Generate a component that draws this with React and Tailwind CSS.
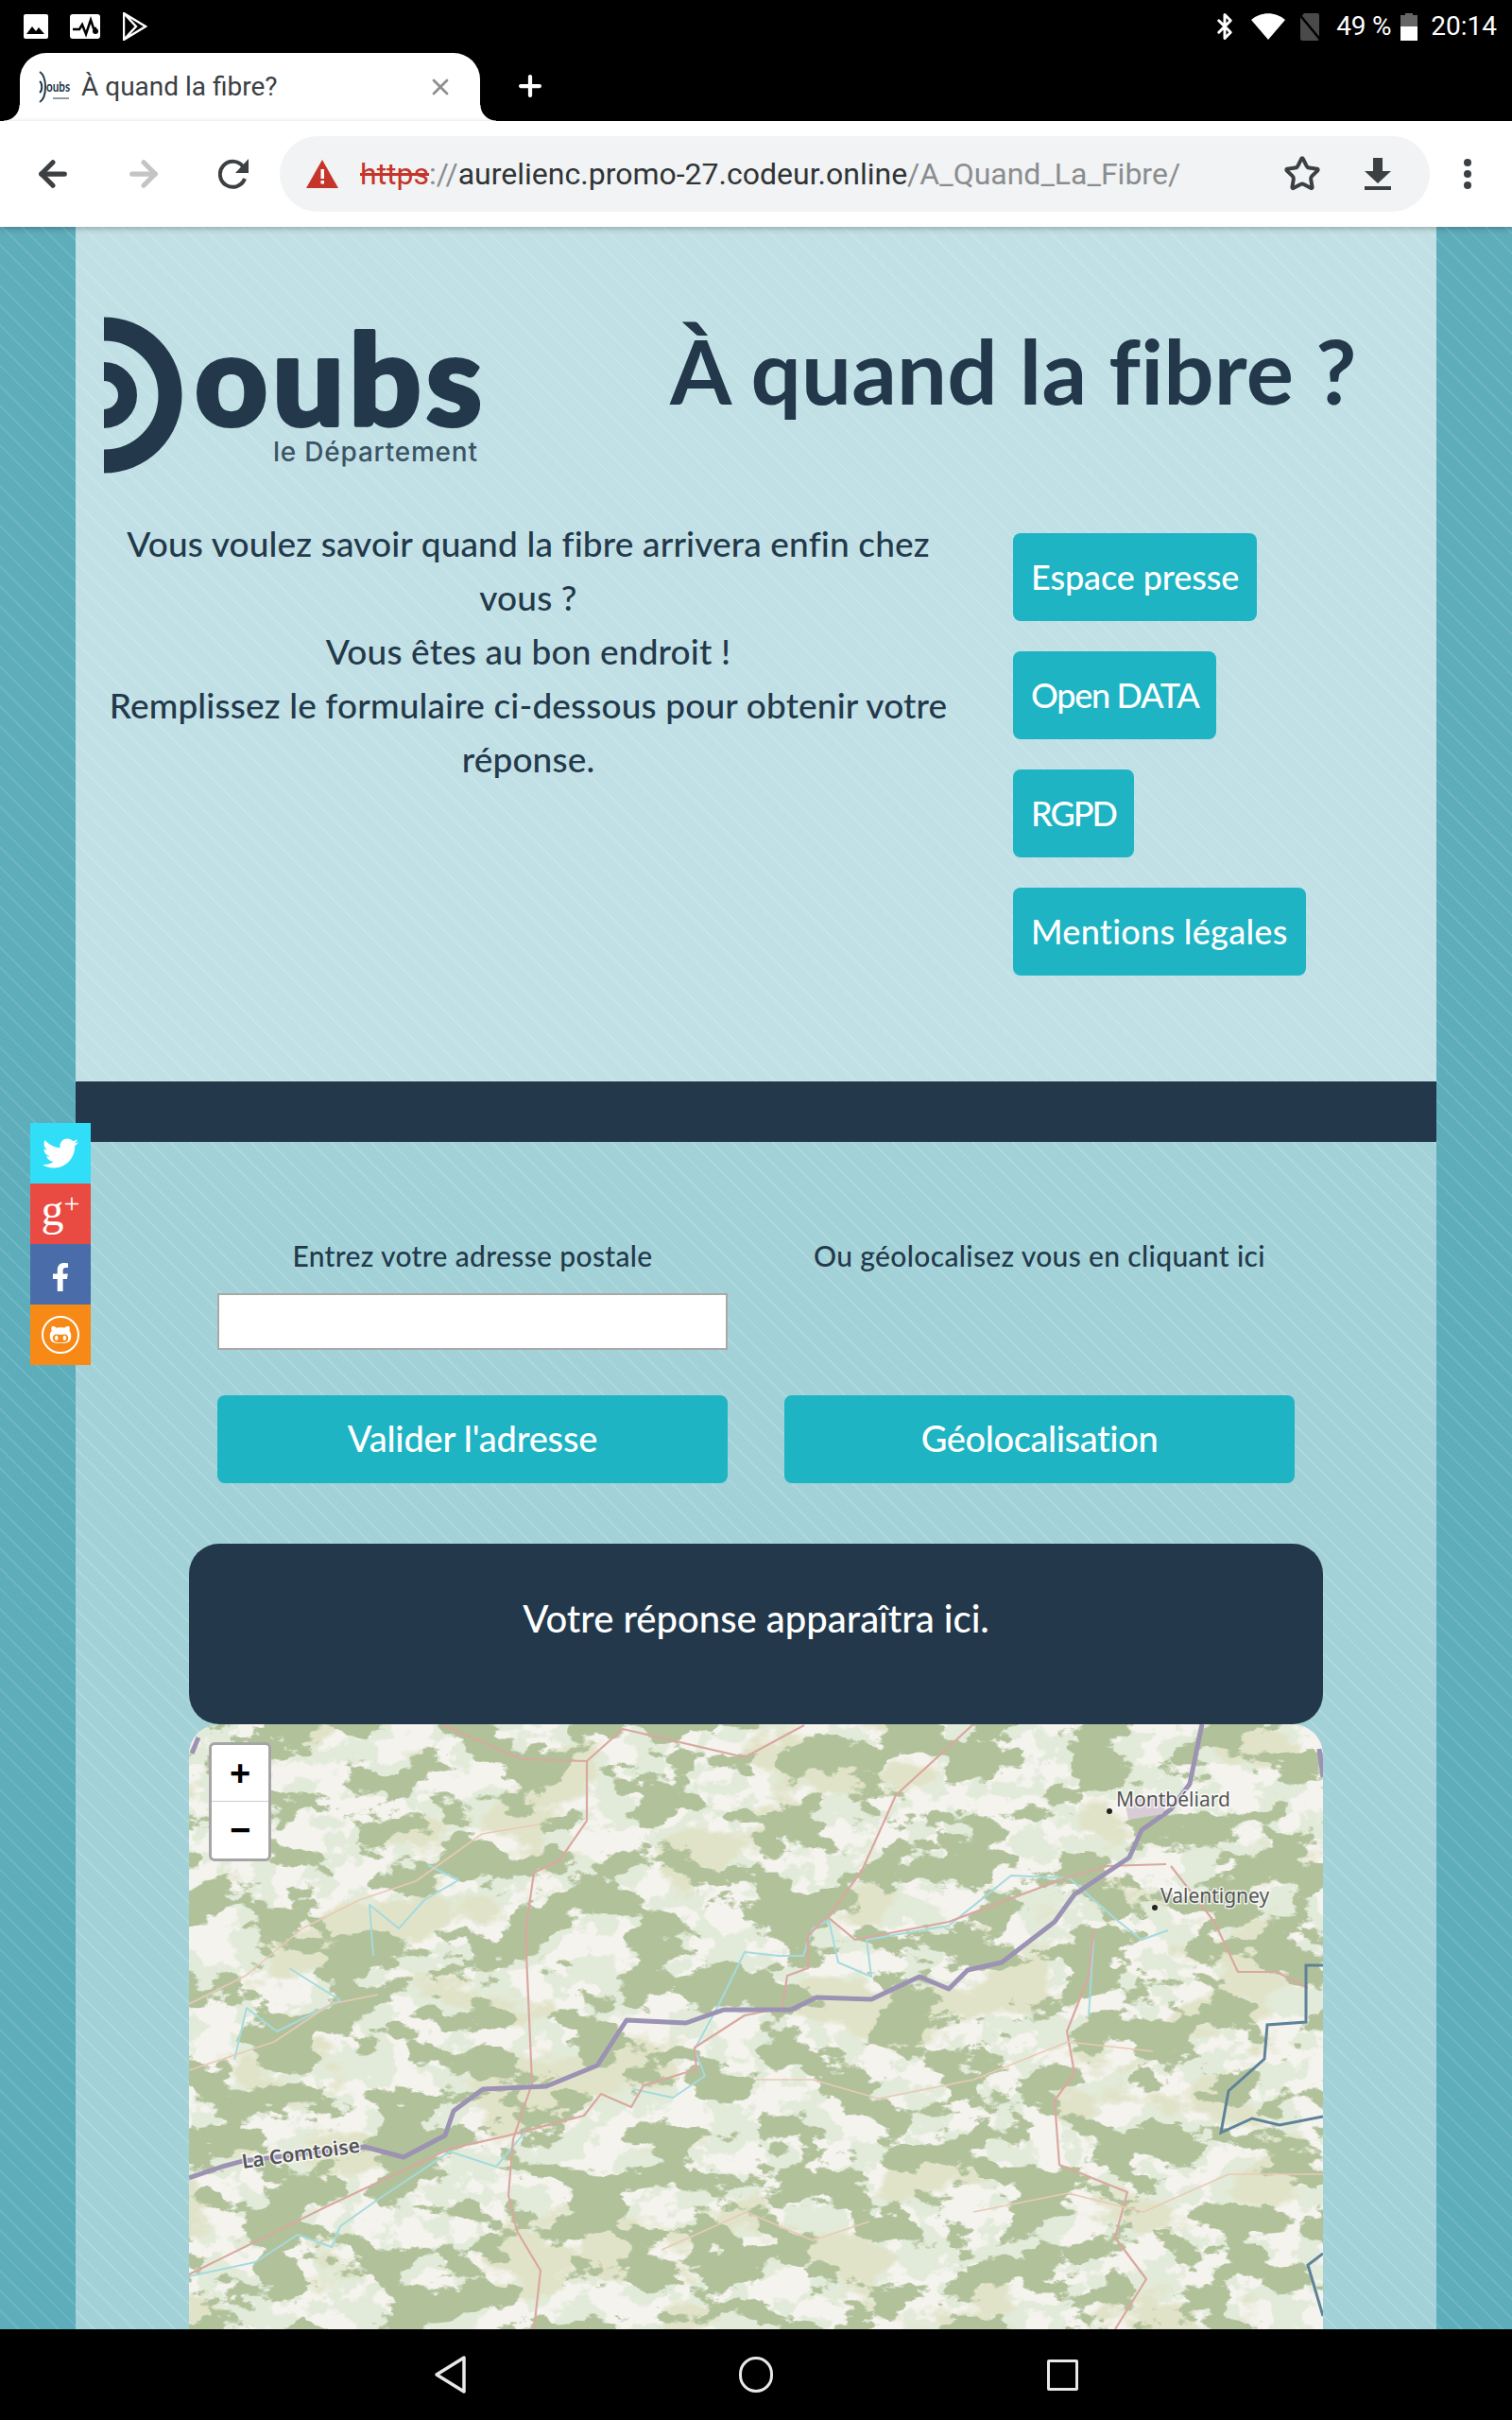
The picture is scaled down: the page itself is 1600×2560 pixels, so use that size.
import React from "react";
import { ArrowLeft, ArrowRight, Star, X, Plus, Bluetooth } from "lucide-react";
import { FaTwitter, FaFacebookF, FaGithubAlt } from "react-icons/fa";

const navy = "#23394b";

function StatusBar() {
  return (
    <div className="h-[56px] bg-black flex items-center pl-[25px] pr-[16px] text-white">
      <svg width="26" height="26" viewBox="0 0 26 26">
        <rect width="26" height="26" rx="2" fill="#fff" />
        <path d="M3 21l6-8 4 5 3-4 6 7z" fill="#000" />
      </svg>
      <svg className="ml-[23px]" width="32" height="26" viewBox="0 0 32 26">
        <rect width="32" height="26" rx="3" fill="#fff" />
        <path d="M3 16h7l3-5 4 10 5-15 3 9h3" fill="none" stroke="#000" strokeWidth="2.5" />
        <circle cx="27" cy="18" r="3" fill="#000" />
      </svg>
      <svg className="ml-[24px]" width="26" height="30" viewBox="0 0 26 30">
        <path d="M1 1l23 14L1 29z M1 1l13 14L1 29" fill="none" stroke="#fff" strokeWidth="2.4" />
      </svg>
      <div className="ml-auto flex items-center text-[28px] font-['Roboto',sans-serif]">
        <Bluetooth size={30} strokeWidth={2.4} />
        <svg className="ml-[13px]" width="36" height="28" viewBox="0 0 36 28">
          <path d="M0 7C10-2 26-2 36 7L18 28z" fill="#fff" />
        </svg>
        <svg className="ml-[13px]" width="26" height="30" viewBox="0 0 26 30">
          <path d="M7 1h14a2 2 0 012 2v25a2 2 0 01-2 2H5a2 2 0 01-2-2V6z" fill="#4a4a4a" />
          <path d="M1 1l24 29" stroke="#000" strokeWidth="2.5" />
        </svg>
        <span className="ml-[15px] tracking-[-0.2px]">49 %</span>
        <div className="ml-[10px] w-[18px] h-[29px] flex flex-col items-center">
          <div className="w-[8px] h-[2px] bg-[#666]" />
          <div className="w-full h-[12px] bg-[#666]" />
          <div className="w-full flex-1 bg-white" />
        </div>
        <span className="ml-[14px]">20:14</span>
      </div>
    </div>
  );
}

function TabStrip() {
  return (
    <div className="h-[72px] bg-black flex items-end text-white">
      <div className="relative ml-[21px] w-[487px] h-[72px] bg-white rounded-t-[28px] flex items-center pl-[20px] pr-[28px] text-[#3c4043]">
        <div className="absolute left-[-17px] bottom-0 w-[17px] h-[17px] bg-[radial-gradient(circle_at_0_0,#000_16px,#fff_17px)]" />
        <div className="absolute right-[-17px] bottom-0 w-[17px] h-[17px] bg-[radial-gradient(circle_at_100%_0,#000_16px,#fff_17px)]" />
        <svg width="34" height="34" viewBox="0 0 34 34" className="overflow-visible">
          <path d="M1 1C9 6 9 28 1 33" fill="none" stroke={navy} strokeWidth="2" />
          <path d="M1 11C4 13 4 21 1 23" fill="none" stroke={navy} strokeWidth="2" />
          <text x="8" y="22" fontSize="15" fontWeight="700" fill={navy} textLength="25" lengthAdjust="spacingAndGlyphs" fontFamily="Lato, sans-serif">oubs</text>
          <path d="M15 29h17" stroke="#6b7a86" strokeWidth="1.5" />
        </svg>
        <span className="ml-[11px] text-[28px] font-['Roboto',sans-serif]">À quand la fibre?</span>
        <X className="ml-auto text-[#8f8f8f]" size={28} strokeWidth={2.4} />
      </div>
      <Plus className="ml-[36px] mb-[20px]" size={34} strokeWidth={3} />
    </div>
  );
}

function Toolbar() {
  return (
    <div className="relative z-10 h-[112px] bg-white flex items-center pl-[8px] shadow-[0_2px_6px_rgba(0,0,0,0.25)] font-['Roboto',sans-serif]">
      <div className="w-[96px] flex justify-center"><ArrowLeft size={42} strokeWidth={3} className="text-[#3c4043]" /></div>
      <div className="w-[96px] flex justify-center"><ArrowRight size={42} strokeWidth={3} className="text-[#c4c4c4]" /></div>
      <div className="w-[96px] flex justify-center">
        <svg width="34" height="34" viewBox="0 0 34 34">
          <path d="M28 22a13.5 13.5 0 11-2-13" fill="none" stroke="#3c4043" strokeWidth="4" />
          <path d="M32 1v15H18z" fill="#3c4043" />
        </svg>
      </div>
      <div className="w-[1217px] h-[80px] bg-[#f1f3f4] rounded-full flex items-center pl-[28px] pr-[41px]">
        <svg width="34" height="30" viewBox="0 0 34 30">
          <path d="M17 0l17 30H0z" fill="#c5352a" />
          <rect x="15.5" y="10" width="3.5" height="10" fill="#fff" />
          <rect x="15.5" y="22" width="3.5" height="3.5" fill="#fff" />
        </svg>
        <div className="ml-[23px] text-[32px] whitespace-nowrap">
          <span className="text-[#c5352a] line-through">https</span>
          <span className="text-[#8a8d90]">://</span>
          <span className="text-[#303336]">aurelienc.promo-27.codeur.online</span>
          <span className="text-[#8a8d90]">/A_Quand_La_Fibre/</span>
        </div>
        <Star className="ml-auto text-[#3c4043]" size={40} strokeWidth={2.4} />
        <svg className="ml-[46px]" width="28" height="34" viewBox="0 0 28 34">
          <path d="M9 0h10v14h9L14 27 0 14h9z" fill="#3c4043" />
          <rect y="30" width="28" height="4" fill="#3c4043" />
        </svg>
      </div>
      <div className="ml-[36px] flex flex-col gap-[4px]">
        <span className="w-[8px] h-[8px] rounded-full bg-[#3c4043]" />
        <span className="w-[8px] h-[8px] rounded-full bg-[#3c4043]" />
        <span className="w-[8px] h-[8px] rounded-full bg-[#3c4043]" />
      </div>
    </div>
  );
}

function Logo() {
  return (
    <svg width="420" height="204" viewBox="110 300 420 204" className="shrink-0">
      <circle cx="110" cy="418" r="70" fill="none" stroke={navy} strokeWidth="25" />
      <circle cx="110" cy="418" r="25" fill="none" stroke={navy} strokeWidth="20" />
      <text x="206" y="450" fontFamily="Lato, sans-serif" fontWeight="900" fontSize="134" fill={navy} stroke={navy} strokeWidth="4" strokeLinejoin="round" textLength="304" lengthAdjust="spacing">oubs</text>
      <text x="289" y="488" fontFamily="Inter, sans-serif" fontWeight="500" fontSize="28" fill="#3c5466" textLength="216" lengthAdjust="spacing">le Département</text>
    </svg>
  );
}

const links = [
  { label: "Espace presse", cls: "tracking-[-0.1px]" },
  { label: "Open DATA", cls: "tracking-[-1.3px]" },
  { label: "RGPD", cls: "tracking-[-2px]" },
  { label: "Mentions légales", cls: "tracking-[0.3px]" },
];

function TopSection() {
  return (
    <div className="h-[904px] bg-[repeating-linear-gradient(45deg,#c1e0e5_0,#c1e0e5_13px,#c8e4e8_13px,#c8e4e8_15px)] text-[#23394b] pt-[60px]">
      <div className="flex items-start pl-[30px]">
        <Logo />
        <h1 className="ml-[179px] mt-[32px] text-[94px] leading-[120px] font-bold tracking-[0.2px] whitespace-nowrap">À quand la fibre ?</h1>
      </div>
      <div className="flex mt-[44px] pl-[30px]">
        <div className="w-[898px] mt-[-2px] text-center text-[37px] leading-[57px] tracking-[0.15px] font-medium">
          <p>Vous voulez savoir quand la fibre arrivera enfin chez</p>
          <p>vous ?</p>
          <p>Vous êtes au bon endroit !</p>
          <p>Remplissez le formulaire ci-dessous pour obtenir votre</p>
          <p>réponse.</p>
        </div>
        <div className="ml-[64px] pt-[16px] flex flex-col items-start gap-[32px]">
          {links.map((l) => (
            <a key={l.label} className={`h-[93px] px-[19px] pb-[2px] flex items-center rounded-[8px] bg-[#1eb4c4] text-white text-[36px] font-medium whitespace-nowrap ${l.cls}`}>{l.label}</a>
          ))}
        </div>
      </div>
    </div>
  );
}

function noiseMatrix(hex, k, c) {
  const [r, g, b] = [1, 3, 5].map((i) => parseInt(hex.slice(i, i + 2), 16) / 255);
  return `0 0 0 0 ${r} 0 0 0 0 ${g} 0 0 0 0 ${b} ${k} 0 0 0 ${c}`;
}

function MapTiles() {
  const layers = [
    { id: "mLight", freq: "0.024 0.03", seed: 4, color: "#e2ebda", k: 18, c: -8.6 },
    { id: "mTan", freq: "0.008 0.012", seed: 11, color: "#e1e3c8", k: 14, c: -7.9 },
    { id: "mForest", freq: "0.015 0.024", seed: 7, color: "#b1c29b", k: 30, c: -15.4 },
  ];
  return (
    <svg width="1200" height="640" viewBox="200 1824 1200 640" className="block">
      <defs>
        {layers.map((l) => (
          <filter key={l.id} id={l.id} x="0" y="0" width="100%" height="100%" colorInterpolationFilters="sRGB">
            <feTurbulence type="fractalNoise" baseFrequency={l.freq} numOctaves="6" seed={l.seed} />
            <feColorMatrix type="matrix" values={noiseMatrix(l.color, l.k, l.c)} />
          </filter>
        ))}
      </defs>
      <rect x="200" y="1824" width="1200" height="640" fill="#f5f3ee" />
      {layers.map((l) => (
        <rect key={l.id} x="200" y="1824" width="1200" height="640" filter={`url(#${l.id})`} />
      ))}
      {/* rivers */}
      <g fill="none" stroke="#a5dade" strokeWidth="2" strokeLinejoin="round">
        <path d="M453 1973L485 1989 449 2010 422 2040 391 2015 395 2069" />
        <path d="M306 2082L360 2116 293 2149 261 2124 248 2179" />
        <path d="M200 2408L270 2393 315 2364 351 2377 360 2355 404 2324 476 2276 525 2292 556 2255" />
        <path d="M670 2210L712 2219 746 2196 735 2168 761 2120 788 2065 824 2069 850 2069 860 2040 877 2031 887 2076 922 2091 917 2052 1004 2037 1070 1984 1132 1987" />
        <path d="M1132 1987L1178 2028 1208 2052 1236 2042M1157 2052L1152 2134" />
      </g>
      {/* roads */}
      <g fill="none" stroke="#d9a8a0" strokeWidth="2.2" strokeLinejoin="round">
        <path d="M467 1824L552 1861 621 1863 659 1829 788 1859 851 1825" />
        <path d="M621 1863V1926L592 1968 565 1981 556 2044 563 2204 543 2263 538 2322 547 2360 572 2402 565 2464" />
        <path d="M200 2406L346 2334 476 2273 538 2259 618 2238 636 2215 668 2229 681 2206 737 2189 735 2166 788 2132 828 2124 833 2090 855 2082 855 2048 873 2029" />
        <path d="M1030 1824L948 1899 912 1979 876 2028 905 2052 1004 2033 1127 1987 1172 1974 1234 1972" />
        <path d="M1157 2042L1152 2091 1129 2149 1137 2193 1116 2222 1121 2290 1193 2319 1180 2367 1213 2411 1180 2464" />
        <path d="M1239 1974L1285 2033 1310 2086 1351 2086 1384 2103" />
      </g>
      <g fill="none" stroke="#e9c9b6" strokeWidth="1.6" strokeLinejoin="round">
        <path d="M200 2120l60-30 60-50 60-30 60-20 70-50 60-10" />
        <path d="M200 2190l90-30 60-40 50-10" />
        <path d="M800 2200l60 0 70 20 100-20 100-40 90 10" />
        <path d="M1030 2340l100-20 80 20 90-40 100 0" />
        <path d="M700 2380l90-40 70 30 60-20" />
      </g>
      {/* border */}
      <g fill="none" stroke="#5e8298" strokeWidth="3">
        <path d="M1400 2079H1382V2139L1341 2142 1338 2178 1300 2212 1292 2256 1325 2241 1354 2248 1400 2239" />
        <path d="M1400 2384L1384 2396 1400 2450" />
      </g>
      {/* motorway */}
      <g fill="none" stroke="#9b92b4" strokeWidth="5" strokeLinejoin="round">
        <path d="M200 2304L235 2292 257 2286 386 2271 427 2282 471 2259 480 2233 511 2210 578 2207 632 2185 663 2137 726 2140 766 2126 837 2126 864 2113 922 2115 973 2091 1004 2104 1024 2084 1060 2076 1116 2033 1137 2004 1195 1965 1208 1936 1239 1914 1259 1887 1272 1824" />
        <path d="M210 1838L203 1855" />
        <path d="M1396 1850L1400 1880" />
      </g>
      {/* towns */}
      <path d="M1190 1905l50-8-10 22-36 6z" fill="#d8cdd6" />
      <circle cx="1174" cy="1916" r="3" fill="#222" />
      <circle cx="1222" cy="2018" r="3" fill="#222" />
      <g fontFamily="'Noto Sans', sans-serif" fill="#555" stroke="#fff" strokeWidth="3" paintOrder="stroke" strokeOpacity="0.75">
        <text x="1181" y="1911" fontSize="21">Montbéliard</text>
        <text x="1228" y="2013" fontSize="21">Valentigney</text>
        <text x="257" y="2294" fontSize="21" fontWeight="600" transform="rotate(-8 257 2294)">La Comtoise</text>
      </g>
    </svg>
  );
}

function ZoomControl() {
  return (
    <div className="absolute left-[21px] top-[19px] w-[66px] border-[3px] border-[#a5a5a5] rounded-[6px] bg-white font-['Liberation_Sans',sans-serif] text-black font-bold text-[38px]">
      <div className="h-[60px] flex items-center justify-center border-b border-[#ccc] leading-none">+</div>
      <div className="h-[60px] flex items-center justify-center leading-none">−</div>
    </div>
  );
}

function FormSection() {
  return (
    <div className="flex-1 bg-[repeating-linear-gradient(45deg,#a2d1d7_0,#a2d1d7_13px,#aed8dd_13px,#aed8dd_15px)] text-[#23394b]">
      <div className="grid grid-cols-2 gap-x-[60px] mx-[150px] pt-[99px]">
        <div className="text-center text-[30px] leading-[42px] tracking-[0.35px] font-medium">Entrez votre adresse postale</div>
        <div className="text-center text-[30px] leading-[42px] tracking-[0.35px] font-medium">Ou géolocalisez vous en cliquant ici</div>
        <input className="mt-[19px] h-[60px] bg-white border-2 border-[#a9a9a9] outline-none" />
        <div />
        <button className="mt-[48px] h-[93px] pb-[2px] rounded-[8px] bg-[#1eb4c4] text-white text-[38px] font-medium tracking-[-0.2px]">Valider l'adresse</button>
        <button className="mt-[48px] h-[93px] pb-[2px] rounded-[8px] bg-[#1eb4c4] text-white text-[38px] font-medium tracking-[-0.4px]">Géolocalisation</button>
      </div>
      <div className="mx-[120px] mt-[64px]">
        <div className="h-[191px] rounded-[32px] bg-[#23394b] text-white text-center text-[40px] font-medium pt-[51px] leading-[56px]">Votre réponse apparaîtra ici.</div>
        <div className="relative rounded-t-[32px] overflow-hidden h-[640px]">
          <MapTiles />
          <ZoomControl />
        </div>
      </div>
    </div>
  );
}

function SocialBar() {
  return (
    <div className="absolute left-[32px] top-[948px] w-[64px] z-20 text-white">
      <div className="h-[64px] bg-[#30dff7] flex items-center justify-center"><FaTwitter size={38} /></div>
      <div className="h-[64px] bg-[#e94b43] flex items-center justify-center font-['Liberation_Serif',serif] text-[48px] leading-none pb-[8px]">g<span className="text-[30px] mb-[14px]">+</span></div>
      <div className="h-[64px] bg-[#4a6ca8] flex items-center justify-center pt-[6px]"><FaFacebookF size={30} /></div>
      <div className="h-[64px] bg-[#f78a17] flex items-center justify-center">
        <div className="w-[40px] h-[40px] rounded-full border-2 border-white flex items-center justify-center"><FaGithubAlt size={24} /></div>
      </div>
    </div>
  );
}

function NavBar() {
  return (
    <div className="relative z-30 h-[96px] bg-black flex items-center">
      <svg className="ml-[459px]" width="36" height="42" viewBox="0 0 36 42">
        <path d="M32 3v36L3 21z" fill="none" stroke="#e8e8e8" strokeWidth="3.5" strokeLinejoin="round" />
      </svg>
      <div className="ml-[287px] w-[36px] h-[38px] rounded-full border-[3.5px] border-[#e8e8e8]" />
      <div className="ml-[290px] w-[33px] h-[33px] rounded-[2px] border-[3.5px] border-[#e8e8e8]" />
    </div>
  );
}

export default function App() {
  return (
    <div className="w-[1600px] h-[2560px] flex flex-col overflow-hidden font-['Lato',sans-serif]">
      <StatusBar />
      <TabStrip />
      <Toolbar />
      <main className="relative h-[2224px] overflow-hidden bg-[repeating-linear-gradient(45deg,#5dadbb_0,#5dadbb_13px,#6eb6c3_13px,#6eb6c3_15px)]">
        <SocialBar />
        <div className="mx-[80px] h-full flex flex-col">
          <TopSection />
          <div className="h-[64px] shrink-0 bg-[#23394b]" />
          <FormSection />
        </div>
      </main>
      <NavBar />
    </div>
  );
}
